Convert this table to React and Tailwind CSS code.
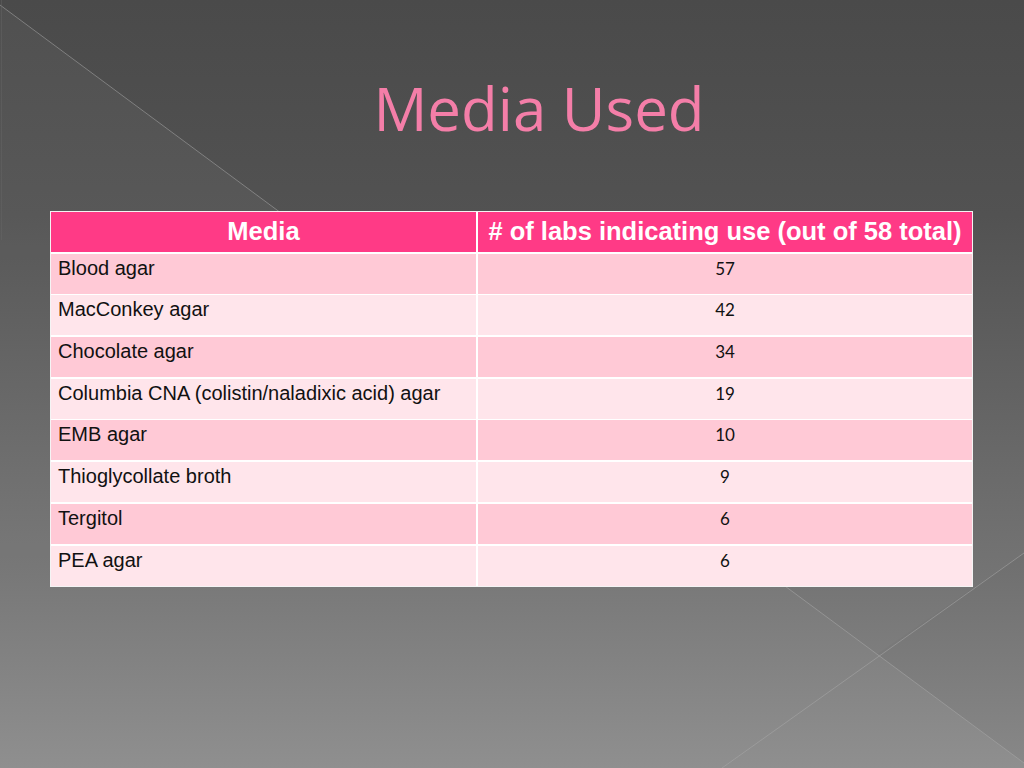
import React from "react";

const rows = [
  ["Blood agar", "57"],
  ["MacConkey agar", "42"],
  ["Chocolate agar", "34"],
  ["Columbia CNA (colistin/naladixic acid) agar", "19"],
  ["EMB agar", "10"],
  ["Thioglycollate broth", "9"],
  ["Tergitol", "6"],
  ["PEA agar", "6"],
];

export default function App() {
  return (
    <div className="relative w-[1024px] h-[768px] overflow-hidden bg-[linear-gradient(180deg,#4a4a4a_0%,#525252_28%,#747474_75%,#8b8b8b_100%)]">
      <svg
        className="absolute inset-0"
        width="1024"
        height="768"
        viewBox="0 0 1024 768"
      >
        <polygon points="0,5 1024,763 1024,768 0,768" fill="#ffffff" fillOpacity="0.035" />
        <polygon points="1024,553 877,654 1024,763" fill="#000000" fillOpacity="0.02" />
        <line x1="0" y1="5" x2="1024" y2="763" stroke="#a8a8a8" strokeOpacity="0.55" strokeWidth="1" />
        <line x1="1024" y1="553" x2="722" y2="768" stroke="#a8a8a8" strokeOpacity="0.55" strokeWidth="1" />
        <line x1="1.5" y1="0" x2="1.5" y2="240" stroke="#6a6a6a" strokeOpacity="0.4" strokeWidth="1" />
      </svg>

      <div className="relative flex flex-col">
        <div className="mt-[78px] h-[60px] pl-[54px] text-center text-[60px] leading-[60px] text-[#f47ea8] font-['Open_Sans',sans-serif]">
          Media Used
        </div>

        <div className="mt-[73px] ml-[50px] w-[923px] border border-[#f4f4f4] bg-white">
          <div className="grid grid-cols-[425px_1fr] gap-x-[2px] gap-y-[1.7px] bg-white">
            <div className="h-[40px] bg-[#ff3a86] flex items-center justify-center pb-[2px] text-white font-bold text-[25.5px] leading-[28px] font-['Liberation_Sans',Arial,sans-serif]">
              Media
            </div>
            <div className="h-[40px] bg-[#ff3a86] flex items-center justify-center pb-[2px] text-white font-bold text-[25.5px] leading-[28px] font-['Liberation_Sans',Arial,sans-serif] whitespace-nowrap">
              # of labs indicating use (out of 58 total)
            </div>
            {rows.map(([name, n], i) => {
              const bg = i % 2 === 0 ? "bg-[#ffc9d6]" : "bg-[#ffe5eb]";
              return (
                <React.Fragment key={name}>
                  <div
                    className={`${bg} h-[40px] pl-[7px] pt-[3px] text-[20px] leading-[22px] text-[#111] font-['Liberation_Sans',Arial,sans-serif] whitespace-nowrap`}
                  >
                    {name}
                  </div>
                  <div
                    className={`${bg} h-[40px] pt-[4px] text-center text-[17px] leading-[22px] text-[#111] font-['Lato',sans-serif]`}
                  >
                    {n}
                  </div>
                </React.Fragment>
              );
            })}
          </div>
        </div>
      </div>
    </div>
  );
}
